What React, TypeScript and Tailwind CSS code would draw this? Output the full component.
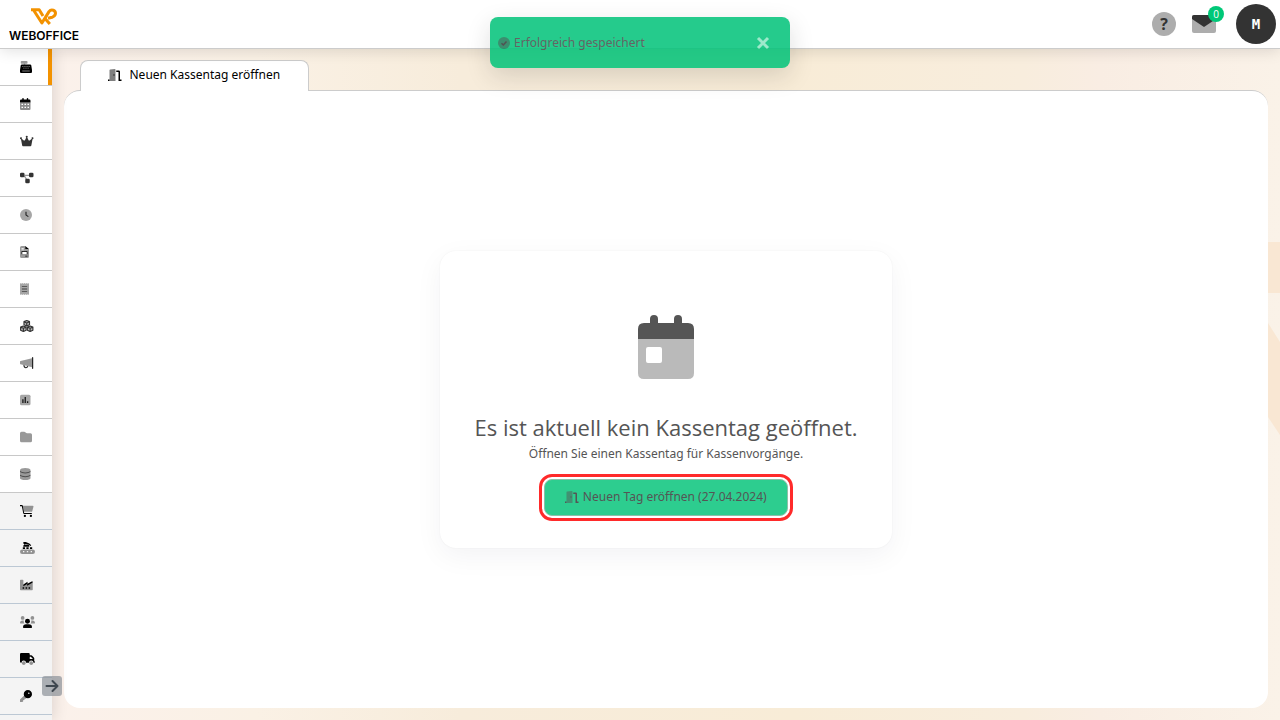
import type { ReactNode } from 'react'

type NavItem = {
    label: string
    width: number
    icon: ReactNode
    muted?: boolean
    tone?: string
}

// every glyph lives on a 512 high grid, the second tone is drawn with opacity
function Glyph({
    width,
    className = 'h-3',
    children,
}: {
    width: number
    className?: string
    children: ReactNode
}) {
    return (
        <svg
            viewBox={`0 0 ${width} 512`}
            className={`block w-auto ${className}`}
            fill="currentColor"
            aria-hidden="true"
        >
            {children}
        </svg>
    )
}

const doorOpen = (
    <>
        <path
            opacity=".5"
            d="M64 60q0-28 28-35L288 0q32 0 32 32v480H64z"
        />
        <path d="M0 448h64v64H0zM352 64h112q48 0 48 48v336h64v64H448V128h-96z" />
        <ellipse cx="256" cy="256" rx="24" ry="32" />
    </>
)

const items: NavItem[] = [
    {
        label: 'Kasse',
        width: 512,
        icon: (
            <>
                <path
                    opacity=".4"
                    d="M64 0h224q32 0 32 32v48q0 32-32 32h-64v48h-64v-48H64q-32 0-32-32V32Q32 0 64 0z"
                />
                <path
                    fillRule="evenodd"
                    d="M80 144h352q40 0 48 40l32 200v80q0 48-48 48H48q-48 0-48-48v-80l32-200q8-40 48-40zM108 210v32h32v-32zm88 0v32h32v-32zm88 0v32h32v-32zm88 0v32h32v-32zM152 292v32h32v-32zm88 0v32h32v-32zm88 0v32h32v-32zM96 416v24h320v-24z"
                />
            </>
        ),
    },
    {
        label: 'Kalender',
        width: 448,
        icon: (
            <>
                <path
                    opacity=".45"
                    fillRule="evenodd"
                    d="M0 192h448v272q0 48-48 48H48q-48 0-48-48zM64 248v48h64v-48zm128 0v48h64v-48zm128 0v48h64v-48zM64 376v48h64v-48zm128 0v48h64v-48zm128 0v48h64v-48z"
                />
                <path d="M96 32q0-32 32-32t32 32v32h128V32q0-32 32-32t32 32v32h48q48 0 48 48v80H0v-80q0-48 48-48h48z" />
            </>
        ),
    },
    {
        label: 'Premium',
        width: 576,
        tone: 'text-[#333]',
        icon: (
            <path d="M309 106a40 40 0 1 0-42 0l-57 115c-9 18-33 23-49 11L72 160a40 40 0 1 0-29 16l48 261c4 24 25 43 49 43h296c24 0 45-18 49-43l48-261a40 40 0 1 0-29-16l-89 72c-16 12-40 7-49-11z" />
        ),
    },
    {
        label: 'Prozesse',
        width: 576,
        tone: 'text-[#333]',
        icon: (
            <>
                <path opacity=".5" d="M192 112h192v56H192zM160 176l48-28 112 180-48 28z" />
                <rect y="32" width="192" height="192" rx="56" />
                <rect x="384" y="32" width="192" height="192" rx="56" />
                <rect x="224" y="288" width="192" height="192" rx="56" />
            </>
        ),
    },
    {
        label: 'Zeiterfassung',
        width: 512,
        icon: (
            <>
                <circle cx="256" cy="256" r="256" opacity=".35" />
                <path d="M232 112h48v132l90 60-28 40-110-76z" opacity=".8" />
            </>
        ),
    },
    {
        label: 'Rechnungen',
        width: 384,
        icon: (
            <>
                <path
                    opacity=".4"
                    fillRule="evenodd"
                    d="M64 0h160v128h160v320q0 64-64 64H64q-64 0-64-64V64Q0 0 64 0zM64 80v32h96V80zm0 64v32h96v-32zm16 96v96h224v-96z"
                />
                <path d="M224 0l160 128H224zM96 208h192q32 0 32 32v112H288V250H96v102H64V240q0-32 32-32zM224 416h96v32h-96z" />
            </>
        ),
    },
    {
        label: 'Belege',
        width: 384,
        icon: (
            <>
                <path
                    opacity=".35"
                    d="M0 0l48 32 48-32 48 32 48-32 48 32 48-32 48 32 48-32v512l-48-32-48 32-48-32-48 32-48-32-48 32-48-32-48 32z"
                />
                <path opacity=".6" d="M80 136h224v36H80zM80 236h224v36H80zM80 336h224v36H80z" />
            </>
        ),
    },
    {
        label: 'Artikel',
        width: 576,
        tone: 'text-[#333]',
        icon: (
            <>
                <path
                    opacity=".35"
                    d="M288 16l120 48v140l-120 50-120-50V64zM144 264l120 50v134l-120 48-120-48V314zM432 264l120 50v134l-120 48-120-48V314z"
                />
                <g fill="none" stroke="currentColor" strokeWidth="48" strokeLinejoin="round">
                    <path d="M288 24l118 46v132l-118 50-118-50V70zM170 76l118 48 118-48M288 124v128" />
                    <path d="M144 256l118 48v134l-118 50-118-50V304zM26 308l118 48 118-48M144 356v130" />
                    <path d="M432 256l118 48v134l-118 50-118-50V304zM314 308l118 48 118-48M432 356v130" />
                </g>
            </>
        ),
    },
    {
        label: 'Marketing',
        width: 576,
        icon: (
            <>
                <path opacity=".4" d="M0 192q0-24 24-24L512 48v384L24 312Q0 312 0 288z" />
                <path d="M512 32q0-32 24-32 28 0 28 32v448q0 32-28 32-24 0-24-32z" opacity=".85" />
                <path d="M144 344l48 12q4 76 60 76 44 0 56-46l46 12q-24 82-102 82-104 0-108-136z" opacity=".85" />
            </>
        ),
    },
    {
        label: 'Statistik',
        width: 448,
        icon: (
            <>
                <rect y="32" width="448" height="448" rx="64" opacity=".35" />
                <path opacity=".85" d="M96 224h56v160H96zM196 128h56v256h-56zM296 304h56v80h-56z" />
            </>
        ),
    },
    {
        label: 'Dokumente',
        width: 512,
        icon: (
            <path
                opacity=".4"
                d="M64 32h117q27 0 46 19l26 26q19 19 45 19h150q64 0 64 64v256q0 64-64 64H64q-64 0-64-64V96q0-64 64-64z"
            />
        ),
    },
    {
        label: 'Datenbank',
        width: 448,
        icon: (
            <>
                <path
                    opacity=".4"
                    d="M0 80C0 36 100 0 224 0s224 36 224 80v352c0 44-100 80-224 80S0 476 0 432z"
                />
                <path
                    opacity=".5"
                    d="M0 130q70 60 224 60t224-60v44q-70 60-224 60T0 174zM0 290q70 60 224 60t224-60v44q-70 60-224 60T0 334z"
                />
            </>
        ),
    },
    {
        label: 'Einkauf',
        width: 576,
        muted: true,
        icon: (
            <>
                <path opacity=".4" d="M122 32h420q40 0 32 40l-52 190q-8 26-34 26H170z" />
                <path d="M0 0h80q34 0 40 34l58 302h326v48H172q-30 0-34-30L78 48H0z" />
                <circle cx="208" cy="464" r="48" />
                <circle cx="464" cy="464" r="48" />
            </>
        ),
    },
    {
        label: 'Produktion',
        width: 640,
        muted: true,
        icon: (
            <>
                <path
                    opacity=".4"
                    fillRule="evenodd"
                    d="M96 320h448a96 96 0 0 1 0 192H96a96 96 0 0 1 0-192zM128 384v56h56v-56zm164 0v56h56v-56zm164 0v56h56v-56z"
                />
                <path d="M144 0h104l150 60 82 76-30 34-92-60-120-30-30 40h130q60 0 60 56v24H140v-48l60-40-56-52zM120 224h96v72h-96zM272 224h96v72h-96zM424 224h96v72h-96z" />
            </>
        ),
    },
    {
        label: 'Fertigung',
        width: 576,
        muted: true,
        icon: (
            <>
                <path
                    opacity=".4"
                    d="M32 32h80q32 0 32 32v192l144-96v96l144-96h112v288q0 32-32 32H32q-32 0-32-32V64q0-32 32-32z"
                />
                <path d="M144 236l176-118v80l176-92h48v40L304 284v-72l-160 96zM112 352h64v64h-64zM240 352h64v64h-64zM368 352h64v64h-64z" />
            </>
        ),
    },
    {
        label: 'Personal',
        width: 640,
        muted: true,
        icon: (
            <>
                <g opacity=".4">
                    <circle cx="112" cy="80" r="80" />
                    <circle cx="528" cy="80" r="80" />
                    <path d="M0 300q0-108 108-108h56q-24 70 26 128H20q-20 0-20-20zM640 300q0-108-108-108h-56q24 70-26 128h170q20 0 20-20z" />
                </g>
                <circle cx="320" cy="224" r="106" />
                <path d="M128 485q0-133 133-133h118q133 0 133 133 0 27-27 27H155q-27 0-27-27z" />
            </>
        ),
    },
    {
        label: 'Versand',
        width: 640,
        muted: true,
        icon: (
            <>
                <path
                    fillRule="evenodd"
                    d="M48 0h320q48 0 48 48v48h60q20 0 34 14l80 80q18 18 18 34v128q32 0 32 32t-32 32h-32a96 96 0 0 0-192 0H256a96 96 0 0 0-192 0H48q-48 0-48-48V48Q0 0 48 0zM416 160v96h128v-14l-82-82z"
                />
                <circle cx="160" cy="432" r="76" opacity=".4" />
                <circle cx="480" cy="432" r="76" opacity=".4" />
            </>
        ),
    },
    {
        label: 'Zugang',
        width: 512,
        muted: true,
        icon: (
            <>
                <path opacity=".4" d="M190 220l102 102-44 46h-56v56h-56v56l-32 32H16q-16 0-16-16v-88z" />
                <path
                    fillRule="evenodd"
                    d="M336 0a176 176 0 1 1 0 352a176 176 0 1 1 0-352zM376 104a32 32 0 1 0 0 64a32 32 0 1 0 0-64z"
                />
            </>
        ),
    },
    { label: 'Weitere', width: 512, muted: true, icon: null },
]

function Logo() {
    return (
        <a href="#" className="flex w-[72px] flex-col items-center gap-1 pt-px" aria-label="Weboffice">
            <svg viewBox="0 0 26 18" className="h-[18px] w-[26px]" fill="none" aria-hidden="true">
                <path
                    d="M0 1.700h8.200l3.800 6.300M2.500 2l8.400 13L18 3.600q1.600-2.200 4.200-1.400 3 1.400 2 4.400-.8 2-3 2.600l-4.200 1"
                    stroke="#f39200"
                    strokeWidth="3"
                    strokeLinejoin="round"
                />
                <path d="M14 10.500l4.800 5.500" stroke="#f39200" strokeWidth="3" />
            </svg>
            <span className="font-[Inter,sans-serif] text-xs leading-3 font-semibold text-black">
                WEBOFFICE
            </span>
        </a>
    )
}

function Header() {
    return (
        <header className="z-20 flex h-[49px] shrink-0 items-center justify-between border-b border-[#ccc] bg-white pr-1 pl-2 shadow-[0_2px_14px_rgba(0,0,0,0.12)]">
            <Logo />
            <div className="flex items-center gap-4">
                <button
                    type="button"
                    aria-label="Hilfe"
                    className="flex size-6 items-center justify-center rounded-full bg-[#adadad] text-base font-bold text-[#333]"
                >
                    ?
                </button>
                <button type="button" aria-label="Nachrichten" className="relative mr-1">
                    <svg viewBox="0 0 24 18" className="h-[18px] w-6" aria-hidden="true">
                        <rect width="24" height="18" rx="2" fill="#adadad" />
                        <path d="M2 0h20q2 0 2 2v2l-12 8L0 4V2q0-2 2-2z" fill="#333" />
                    </svg>
                    <span className="absolute -top-[9px] -right-2 flex size-4 items-center justify-center rounded-full bg-[#00c878] text-[10px] leading-4 text-white">
                        0
                    </span>
                </button>
                <button
                    type="button"
                    aria-label="Benutzerkonto"
                    className="flex size-10 items-center justify-center rounded-full bg-[#333] font-['DejaVu_Sans_Mono',monospace] text-sm font-bold text-white"
                >
                    M
                </button>
            </div>
        </header>
    )
}

function Sidebar() {
    return (
        <nav className="relative z-10 w-[52px] shrink-0 bg-[#f4f4f4] shadow-[2px_0_14px_rgba(0,0,0,0.12)]">
            <ul className="h-full overflow-hidden">
                {items.map((item, i) => (
                    <li key={item.label}>
                        <a
                            href="#"
                            aria-label={item.label}
                            className={`flex h-[37px] items-center border-b pb-px pl-5 ${
                                item.muted
                                    ? 'border-[#bcc8d4] bg-[#f4f4f4]'
                                    : 'border-[#c8c8c8] bg-white'
                            } ${item.tone ?? 'text-black'} ${
                                i === 0 ? 'shadow-[inset_-4px_0_0_#f39200]' : ''
                            }`}
                        >
                            <Glyph width={item.width}>{item.icon}</Glyph>
                        </a>
                    </li>
                ))}
            </ul>
            <button
                type="button"
                aria-label="Menü ausklappen"
                className="absolute -right-[10px] bottom-6 flex size-5 items-center justify-center rounded-[3px] bg-[#8c9198]/70 text-[#404850]"
            >
                <svg viewBox="0 0 14 14" className="size-[14px]" fill="none" stroke="currentColor" strokeWidth="2" strokeLinecap="round" strokeLinejoin="round">
                    <path d="M1.500 7h11M7.500 2l5 5-5 5" />
                </svg>
            </button>
        </nav>
    )
}

function Backdrop() {
    return (
        <svg
            viewBox="0 0 1280 720"
            preserveAspectRatio="none"
            className="absolute inset-0 size-full"
            aria-hidden="true"
        >
            <defs>
                <linearGradient id="cream" x1="0" x2="1" y1="0" y2="0">
                    <stop offset="0.04" stopColor="#fbf1eb" />
                    <stop offset="0.2" stopColor="#faf1e5" />
                    <stop offset="0.36" stopColor="#f7ecdb" />
                    <stop offset="0.62" stopColor="#f8ecd7" />
                    <stop offset="0.8" stopColor="#f8eddd" />
                    <stop offset="0.86" stopColor="#f9ede3" />
                    <stop offset="1" stopColor="#faf2e8" />
                </linearGradient>
            </defs>
            <rect width="1280" height="720" fill="url(#cream)" />
            <path d="M1100 242h180v51h-180zM1268 323l12 19v93l-12-18z" fill="#f9e7d3" />
        </svg>
    )
}

function EmptyState() {
    return (
        <section className="flex flex-col items-center rounded-2xl bg-white px-[34px] pt-16 pb-8 text-[#555] shadow-[0_8px_28px_rgba(0,0,50,0.05),0_0_2px_rgba(0,0,0,0.06)]">
            <svg viewBox="0 0 448 512" className="h-16 w-14" aria-hidden="true">
                <path
                    fill="#bababa"
                    fillRule="evenodd"
                    d="M0 192h448v272q0 48-48 48H48q-48 0-48-48zM80 256q-16 0-16 16v96q0 16 16 16h96q16 0 16-16v-96q0-16-16-16z"
                />
                <path
                    fill="#555"
                    d="M96 32q0-32 32-32t32 32v32h128V32q0-32 32-32t32 32v32h48q48 0 48 48v80H0v-80q0-48 48-48h48z"
                />
            </svg>
            <h1 className="mt-8 text-[22px] leading-8">Es ist aktuell kein Kassentag geöffnet.</h1>
            <p className="font-['Noto_Sans',sans-serif] text-xs leading-[22px]">
                Öffnen Sie einen Kassentag für Kassenvorgänge.
            </p>
            <button
                type="button"
                className="mt-[14px] flex h-[37px] items-center gap-1 rounded-lg border border-[#8fbfa9] bg-[#2dcd8f] px-5 pb-px font-['Noto_Sans',sans-serif] text-xs outline-3 outline-offset-2 outline-[#ff2a2a]"
            >
                <Glyph width={576}>{doorOpen}</Glyph>
                Neuen Tag eröffnen (27.04.2024)
            </button>
        </section>
    )
}

function Toast() {
    return (
        <div
            role="status"
            className="absolute top-[17px] left-1/2 z-30 flex h-[51px] w-[300px] -translate-x-1/2 items-center rounded-lg bg-[#00c378] pr-5 pl-2 font-['Noto_Sans',sans-serif] text-xs text-[#4a4a4a] opacity-85 shadow-[0_8px_24px_rgba(0,0,0,0.15)]"
        >
            <svg viewBox="0 0 12 12" className="mr-1 size-3" aria-hidden="true">
                <circle cx="6" cy="6" r="6" fill="#333" opacity=".5" />
                <path d="M3.500 6.200l1.800 1.800 3.200-3.600" fill="none" stroke="#333" strokeWidth="1.500" />
            </svg>
            Erfolgreich gespeichert
            <button type="button" aria-label="Schließen" className="ml-auto text-[#8ce6c2]">
                <svg viewBox="0 0 14 14" className="size-[14px]" stroke="currentColor" strokeWidth="3">
                    <path d="M2 2l10 10M12 2L2 12" />
                </svg>
            </button>
        </div>
    )
}

export default function App() {
    return (
        <div className="relative flex h-screen flex-col overflow-hidden font-['Open_Sans',sans-serif] text-black">
            <Backdrop />
            <Header />
            <div className="relative flex min-h-0 flex-1">
                <Sidebar />
                <main className="flex min-w-0 flex-1 flex-col px-3 pt-[11px] pb-3">
                    <div className="z-10 ml-4 flex">
                        <button
                            type="button"
                            className="-mb-px flex h-[31px] items-center gap-2 rounded-t-lg border border-b-0 border-[#ccc] bg-white pr-7 pb-0.5 pl-[27px] font-['Noto_Sans',sans-serif] text-xs"
                        >
                            <Glyph width={576}>{doorOpen}</Glyph>
                            Neuen Kassentag eröffnen
                        </button>
                    </div>
                    <div className="flex flex-1 items-center justify-center rounded-2xl border-t border-[#ccc] bg-white">
                        <EmptyState />
                    </div>
                </main>
            </div>
            <Toast />
        </div>
    )
}
